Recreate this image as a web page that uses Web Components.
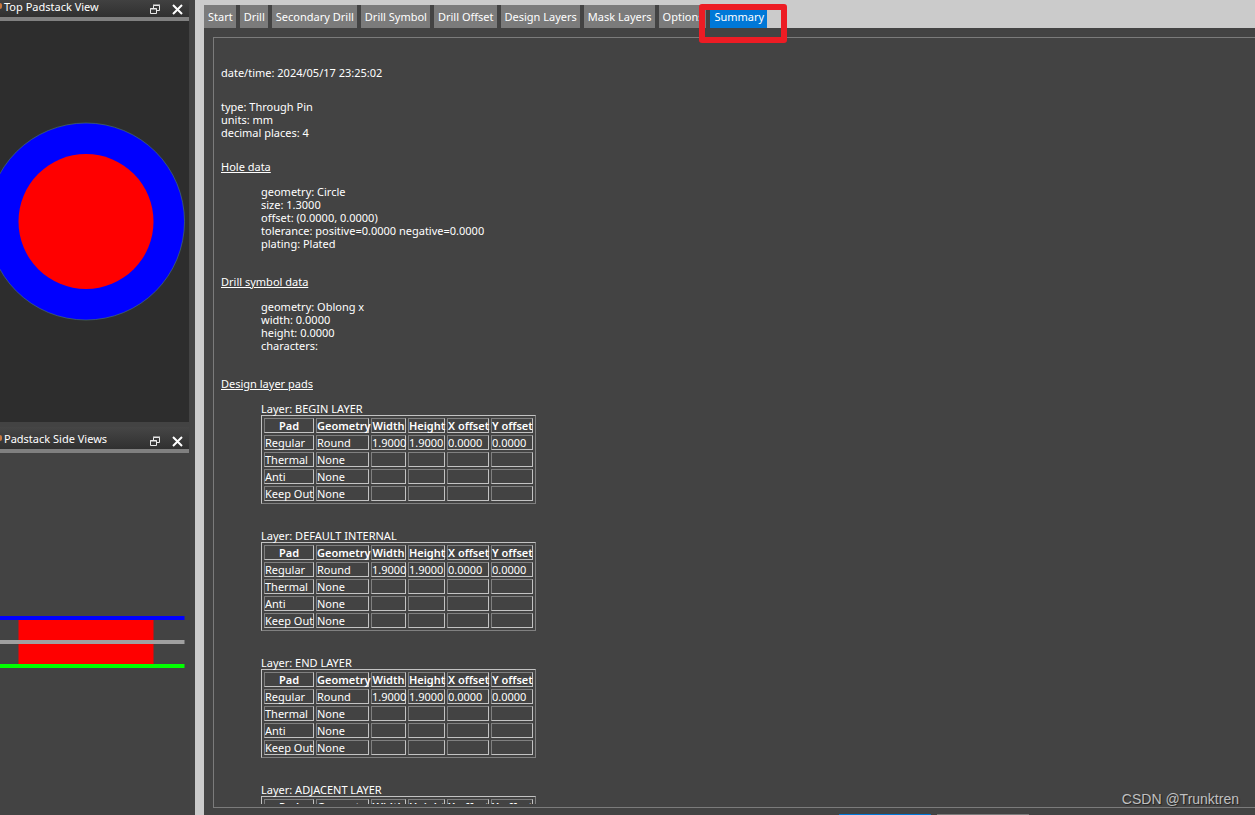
<!DOCTYPE html>
<html lang="en">
<head>
<meta charset="utf-8">
<title>Padstack Editor</title>
<style>
html, body { margin: 0; height: 100%; }
body { background: #434343; color: #fff; font: 11px/13px "Noto Sans", "Open Sans", sans-serif; overflow: hidden; }
</style>
</head>
<body>
<padstack-editor></padstack-editor>
<script>
function define(name, html, setup) {
  const template = document.createElement('template');
  template.innerHTML = html;
  customElements.define(name, class extends HTMLElement {
    constructor() {
      super();
      this.attachShadow({ mode: 'open' }).append(template.content.cloneNode(true));
    }
    connectedCallback() {
      if (setup && !this.ready) { this.ready = true; setup(this, this.shadowRoot); }
    }
  });
}

define('dock-panel', `
<style>
:host { display: flex; flex-direction: column; min-height: 0; }
header { display: flex; align-items: center; flex: none; height: 22px; padding-right: 6px; background: linear-gradient(#464646, #303030); border-bottom: 4px solid #808080; }
i { width: 2px; height: 6px; margin-right: 2px; border-radius: 0 3px 3px 0; background: #c87840; }
h2 { flex: 1; margin: 0; font: inherit; font-size: 11px; white-space: nowrap; }
button { border: 0; padding: 0; margin: 6px 0 0 10px; width: 12px; height: 12px; background: none; color: #fff; }
svg { display: block; }
.view { flex: 1; min-height: 0; overflow: hidden; }
</style>
<header><i></i><h2><slot name="title"></slot></h2>
<button aria-label="Float"><svg width="12" height="12" fill="none" stroke="#e8e8e8"><path d="M4.500 5V2.500h6v5H8M4 2h7M1.500 5.500h6v5h-6zM1 6h7"/></svg></button>
<button aria-label="Close"><svg width="12" height="12" fill="none" stroke="#fff" stroke-width="2"><path d="M2 2l9 9M11 2l-9 9"/></svg></button>
</header>
<div class="view"><slot></slot></div>`);

define('top-view', `
<style>:host { display: block; background: #2d2d2d; height: 100%; } svg { display: block; }</style>
<svg width="189" height="401" role="img" aria-label="Top view of the padstack">
<circle cx="86" cy="200.500" r="98.500" fill="#00f" stroke="#4d7a68" stroke-width=".6"/>
<circle cx="86" cy="200.500" r="67.500" fill="#f00"/></svg>`);

define('side-view', `
<style>:host { display: block; } svg { display: block; }</style>
<svg width="189" height="360" role="img" aria-label="Side view of the padstack">
<path fill="#f00" d="M18.500 165h135v48h-135z"/><path fill="#00f" d="M0 163h184.500v4H0z"/>
<path fill="#a0a0a0" d="M0 187h184.500v4H0z"/><path fill="#0f0" d="M0 211h184.500v4H0z"/></svg>`);

define('tab-strip', `
<style>
:host { display: flex; height: 23px; padding-top: 5px; background: #cbcbcb; }
nav { display: flex; gap: 4px; background: #434343; }
button { border: 0; margin: 0; padding: 0 3px 0 4px; height: 23px; background: #7b7b7b; color: #fff; font: inherit; font-size: 11px; white-space: nowrap; }
button[aria-selected="true"] { background: #0078d7; }
.last { position: relative; display: flex; }
.mark { position: absolute; left: -11px; top: -1px; width: 76px; height: 27px; border: 6px solid #ed1c24; border-radius: 3px; pointer-events: none; }
</style>
<nav role="tablist"></nav>`, (host, root) => {
  const nav = root.querySelector('nav');
  for (const label of host.getAttribute('tabs').split(',')) {
    const button = document.createElement('button');
    button.textContent = label;
    button.setAttribute('role', 'tab');
    const selected = label === host.getAttribute('selected');
    button.setAttribute('aria-selected', selected);
    if (selected) {
      const box = document.createElement('div');
      box.className = 'last';
      const mark = document.createElement('span');
      mark.className = 'mark';
      box.append(button, mark);
      nav.append(box);
    } else nav.append(button);
  }
});

define('data-section', `
<style>
:host { display: block; margin-bottom: 25px; }
h3 { margin: 0 0 12px; font: inherit; text-decoration: underline; }
div { padding-left: 40px; }
</style>
<h3><slot name="title"></slot></h3><div><slot></slot></div>`);

define('layer-table', `
<style>
:host { display: block; margin-bottom: 25px; }
table { table-layout: fixed; width: 275px; border: 1px solid; border-color: #c3c3c3 #808080 #808080 #c3c3c3; border-spacing: 2px; }
caption { text-align: left; white-space: nowrap; }
th, td { height: 13px; padding: 0; border: 1px solid; border-color: #808080 #c3c3c3 #c3c3c3 #808080; white-space: nowrap; text-align: left; }
thead th { text-align: center; font-weight: 600; }
tbody th { font-weight: normal; }
</style>
<table><caption></caption>
<colgroup><col style="width:50px"><col style="width:53px"><col style="width:35px"><col style="width:37px"><col style="width:42px"><col style="width:42px"></colgroup>
<thead><tr><th scope="col">Pad</th><th scope="col">Geometry</th><th scope="col">Width</th><th scope="col">Height</th><th scope="col">X offset</th><th scope="col">Y offset</th></tr></thead>
<tbody>
<tr><th scope="row">Regular</th><td>Round</td><td>1.9000</td><td>1.9000</td><td>0.0000</td><td>0.0000</td></tr>
<tr><th scope="row">Thermal</th><td>None</td><td></td><td></td><td></td><td></td></tr>
<tr><th scope="row">Anti</th><td>None</td><td></td><td></td><td></td><td></td></tr>
<tr><th scope="row">Keep Out</th><td>None</td><td></td><td></td><td></td><td></td></tr>
</tbody></table>`, (host, root) => {
  root.querySelector('caption').textContent = 'Layer: ' + host.getAttribute('layer');
});

define('summary-report', `
<style>
:host { display: block; padding: 25px 7px 0; height: 100%; box-sizing: border-box; overflow: hidden; }
p { margin: 0 0 21px; }
</style>
<p>date/time: 2024/05/17 23:25:02</p>
<p>type: Through Pin<br>units: mm<br>decimal places: 4</p>
<data-section><span slot="title">Hole data</span>geometry: Circle<br>size: 1.3000<br>offset: (0.0000, 0.0000)<br>tolerance: positive=0.0000 negative=0.0000<br>plating: Plated</data-section>
<data-section><span slot="title">Drill symbol data</span>geometry: Oblong x<br>width: 0.0000<br>height: 0.0000<br>characters:</data-section>
<data-section><span slot="title">Design layer pads</span>
<layer-table layer="BEGIN LAYER"></layer-table><layer-table layer="DEFAULT INTERNAL"></layer-table><layer-table layer="END LAYER"></layer-table><layer-table layer="ADJACENT LAYER"></layer-table>
</data-section>`);

define('padstack-editor', `
<style>
:host { display: grid; grid-template-columns: 189px minmax(0, 1fr); column-gap: 6px; height: 100vh; overflow: hidden; }
aside { display: flex; flex-direction: column; gap: 5px; margin-top: -5px; min-height: 0; overflow: hidden; }
.top { flex: none; }
.side { flex: 1; }
main { display: flex; flex-direction: column; min-height: 0; border-left: 9px solid #cbcbcb; }
tab-strip { flex: none; }
.frame { flex: 1; min-height: 0; margin: 9px 0 0 9px; padding: 3px 0 3px; border: 1px solid #7b7b7b; border-right: 0; }
footer { display: flex; justify-content: flex-end; gap: 6px; flex: none; height: 1px; margin-top: 6px; padding-right: 226px; overflow: hidden; }
footer button { flex: none; width: 92px; height: 23px; border: 0; background: #7b7b7b; }
footer .primary { background: #0078d7; }
.credit { position: absolute; right: 16px; bottom: 7px; font-family: "Liberation Sans", sans-serif; font-size: 14px; line-height: 18px; color: #c0c0c0; text-shadow: 1px 1px 1px #222; }
</style>
<aside>
<dock-panel class="top"><span slot="title">Top Padstack View</span><top-view></top-view></dock-panel>
<dock-panel class="side"><span slot="title">Padstack Side Views</span><side-view></side-view></dock-panel>
</aside>
<main>
<tab-strip tabs="Start,Drill,Secondary Drill,Drill Symbol,Drill Offset,Design Layers,Mask Layers,Options,Summary" selected="Summary"></tab-strip>
<div class="frame"><summary-report></summary-report></div>
<footer><button class="primary" aria-label="Apply"></button><button aria-label="Close"></button></footer>
</main>
<div class="credit">CSDN @Trunktren</div>`);
</script>
</body>
</html>
